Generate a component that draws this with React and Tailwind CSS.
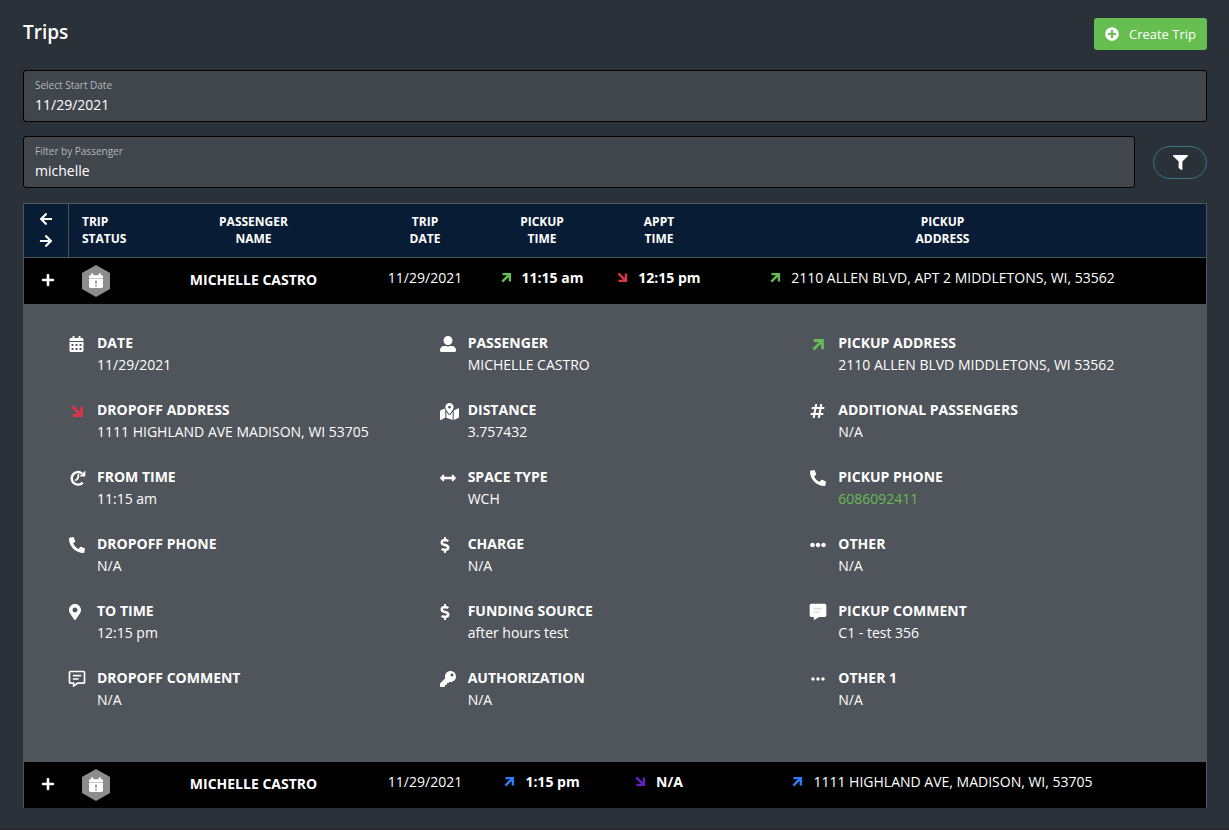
import { useState } from "react";
import {
  FaArrowLeft, FaArrowRight, FaArrowsAltH, FaCalendarAlt, FaDollarSign, FaEllipsisH, FaFilter,
  FaHashtag, FaKey, FaMapMarkedAlt, FaMapMarkerAlt, FaPhoneAlt, FaPlus, FaPlusCircle, FaUserAlt,
} from "react-icons/fa";
import { BiDotsHorizontalRounded, BiMessageDetail } from "react-icons/bi";

const ArrowUp = ({ className }) => (
  <svg viewBox="0 0 12 12" className={className} fill="none" stroke="currentColor" strokeWidth="2.6">
    <path d="M1.6 2.3h8.1V10.4M9.6 2.4L1.4 10.6" />
  </svg>
);

const ArrowDown = ({ className }) => (
  <svg viewBox="0 0 12 12" className={className} fill="none" stroke="currentColor" strokeWidth="2.6">
    <path d="M9.7 1.6v8.1H1.6M9.6 9.6L1.4 1.4" />
  </svg>
);

const ClockRefresh = () => (
  <svg viewBox="0 0 16 16" className="w-[17px] h-4" fill="none" stroke="currentColor" strokeWidth="2.4">
    <path d="M12.4 3.4A6.3 6.3 0 1 0 13.2 12.6" />
    <path d="M15.8 0.4v6.2H9.8z" fill="currentColor" stroke="none" />
    <path d="M9 4.2L8.4 8.4L5.8 10.6" strokeWidth="1.8" />
  </svg>
);

const MessageSolid = () => (
  <svg viewBox="0 0 24 24" className="size-5 -m-0.5" fill="#fff">
    <path d="M20 2H4c-1.103 0-2 .894-2 1.992v12.016C2 17.106 2.897 18 4 18h3v4l6.351-4H20c1.103 0 2-.894 2-1.992V3.992A1.998 1.998 0 0 0 20 2z" />
    <path d="M7 7h10v2H7zM7 11h7v2H7z" fill="#dcdddf" />
  </svg>
);

const StatusBadge = () => (
  <svg viewBox="0 0 28 32" className="w-7 h-8" role="img" aria-label="Scheduled">
    <path d="M14 0L28 8v16L14 32L0 24V8z" fill="#8d8d8d" />
    <path d="M9 8.6h2.4v1.6h5.2V8.6H19v1.6h.6a1.4 1.4 0 0 1 1.4 1.4V13H7v-1.4a1.4 1.4 0 0 1 1.4-1.4H9zM7 13.6h14v8a1.4 1.4 0 0 1-1.4 1.4H8.4a1.4 1.4 0 0 1-1.4-1.4z" fill="#fff" />
    <path d="M13.3 15.4h1.4v3.4h-1.4zM13.3 20h1.4v1.4h-1.4z" fill="#777" />
  </svg>
);

const details = [
  { icon: <FaCalendarAlt className="h-4 w-[15px]" />, title: "DATE", value: "11/29/2021" },
  { icon: <FaUserAlt className="size-4" />, title: "PASSENGER", value: "MICHELLE CASTRO" },
  { icon: <ArrowUp className="size-[13px] m-0.5 text-[#66bb55]" />, title: "PICKUP ADDRESS", value: "2110 ALLEN BLVD MIDDLETONS, WI 53562" },
  { icon: <ArrowDown className="size-[13px] m-0.5 text-[#dc3545]" />, title: "DROPOFF ADDRESS", value: "1111 HIGHLAND AVE MADISON, WI 53705" },
  { icon: <FaMapMarkedAlt className="h-[17px] w-[19px]" />, title: "DISTANCE", value: "3.757432" },
  { icon: <FaHashtag className="h-4 w-[15px]" />, title: "ADDITIONAL PASSENGERS", value: "N/A" },
  { icon: <ClockRefresh />, title: "FROM TIME", value: "11:15 am" },
  { icon: <FaArrowsAltH className="size-4" />, title: "SPACE TYPE", value: "WCH" },
  { icon: <FaPhoneAlt className="size-4" />, title: "PICKUP PHONE", value: "6086092411", href: "tel:6086092411" },
  { icon: <FaPhoneAlt className="size-4" />, title: "DROPOFF PHONE", value: "N/A" },
  { icon: <FaDollarSign className="h-4 w-2.5" />, title: "CHARGE", value: "N/A" },
  { icon: <FaEllipsisH className="size-4" />, title: "OTHER", value: "N/A" },
  { icon: <FaMapMarkerAlt className="h-4 w-3" />, title: "TO TIME", value: "12:15 pm" },
  { icon: <FaDollarSign className="h-4 w-2.5" />, title: "FUNDING SOURCE", value: "after hours test" },
  { icon: <MessageSolid />, title: "PICKUP COMMENT", value: "C1 - test 356" },
  { icon: <BiMessageDetail className="size-5 -m-0.5" />, title: "DROPOFF COMMENT", value: "N/A" },
  { icon: <FaKey className="size-4" />, title: "AUTHORIZATION", value: "N/A" },
  { icon: <BiDotsHorizontalRounded className="size-5 -m-0.5" />, title: "OTHER 1", value: "N/A" },
];

const trips = [
  {
    id: 1, name: "MICHELLE CASTRO", date: "11/29/2021", pickup: "11:15 am", appt: "12:15 pm",
    address: "2110 ALLEN BLVD, APT 2 MIDDLETONS, WI, 53562",
    up: "text-[#66bb55]", down: "text-[#dc3545]",
  },
  {
    id: 2, name: "MICHELLE CASTRO", date: "11/29/2021", pickup: "1:15 pm", appt: "N/A",
    address: "1111 HIGHLAND AVE, MADISON, WI, 53705",
    up: "text-[#2f7cf6]", down: "text-[#6420c8]",
  },
];

const Field = ({ id, label, value, onChange }) => (
  <div className="flex-1 rounded-[3px] border border-black bg-[#41454c] px-[11px] py-[5px]">
    <label htmlFor={id} className="block text-[10px] leading-[18px] text-[#b4b8bd]">{label}</label>
    <input
      id={id}
      type="text"
      value={value}
      onChange={onChange}
      className="block w-full bg-transparent text-sm leading-[22px] text-white outline-none"
    />
  </div>
);

const TripRow = ({ trip, onToggle }) => (
  <tr className="h-[46px] bg-black">
    <td className="pl-1 pb-0.5">
      <button type="button" aria-label="Toggle details" onClick={onToggle} className="block mx-auto">
        <FaPlus className="size-3.5" />
      </button>
    </td>
    <td className="pl-[13px]"><StatusBadge /></td>
    <td className="pb-0.5 text-center font-bold">{trip.name}</td>
    <td className="pb-1.5 text-center">{trip.date}</td>
    <td className="pb-1.5 font-bold">
      <div className="flex items-center justify-center gap-2.5">
        <ArrowUp className={`size-[11px] ${trip.up}`} />{trip.pickup}
      </div>
    </td>
    <td className="pb-1.5 font-bold">
      <div className="flex items-center justify-center gap-2.5">
        <ArrowDown className={`size-[11px] ${trip.down}`} />{trip.appt}
      </div>
    </td>
    <td className="pb-1.5">
      <div className="flex items-center justify-center gap-2.5">
        <ArrowUp className={`size-[11px] ${trip.up}`} />{trip.address}
      </div>
    </td>
    <td></td>
  </tr>
);

const TripDetails = () => (
  <tr className="bg-[#50545b]">
    <td colSpan={8} className="pt-7 pb-[51px] pl-[45px] pr-[25px]">
      <dl className="grid grid-cols-3 gap-y-[23px]">
        {details.map(({ icon, title, value, href }) => (
          <div key={title} className="flex">
            <span className="w-7 shrink-0 pt-1">{icon}</span>
            <div className="leading-[22px]">
              <dt className="font-bold">{title}</dt>
              <dd>{href ? <a href={href} className="text-[#66bb55]">{value}</a> : value}</dd>
            </div>
          </div>
        ))}
      </dl>
    </td>
  </tr>
);

export default function App() {
  const [date, setDate] = useState("11/29/2021");
  const [passenger, setPassenger] = useState("michelle");
  const [open, setOpen] = useState(1);

  return (
    <main className="min-h-screen border-b-2 border-[#2e2832] bg-[#2b3138] pl-[23px] pr-[22px] pt-[18px] font-['Open_Sans','Noto_Sans',sans-serif] text-sm text-white">
      <header className="flex items-start justify-between">
        <h1 className="text-[19px] leading-7 font-semibold">Trips</h1>
        <button type="button" className="flex h-8 items-center gap-2.5 rounded-[3px] bg-[#66bd50] px-[11px] text-[13px]">
          <FaPlusCircle className="size-3.5" />Create Trip
        </button>
      </header>

      <div className="mt-5 flex">
        <Field id="start-date" label="Select Start Date" value={date} onChange={(e) => setDate(e.target.value)} />
      </div>
      <div className="mt-[14px] flex items-center gap-[18px]">
        <Field id="passenger" label="Filter by Passenger" value={passenger} onChange={(e) => setPassenger(e.target.value)} />
        <button type="button" aria-label="Filter" className="flex h-[33px] w-[54px] items-center justify-center rounded-full border border-[#347785]">
          <FaFilter className="size-[15px]" />
        </button>
      </div>

      <table className="mt-[15px] w-full table-fixed border-x border-t border-[#50545b]">
        <colgroup>
          <col className="w-[45px]" />
          <col className="w-[72px]" />
          <col className="w-[226px]" />
          <col className="w-[117px]" />
          <col className="w-[117px]" />
          <col className="w-[117px]" />
          <col />
          <col className="w-[39px]" />
        </colgroup>
        <thead className="border-b border-[#50545b] bg-[#091c36] text-xs leading-[17px]">
          <tr className="h-[54px]">
            <th className="border-r border-[#50545b] pb-0.5">
              <div className="flex flex-col items-center gap-2 text-sm">
                <button type="button" aria-label="Previous columns"><FaArrowLeft /></button>
                <button type="button" aria-label="Next columns"><FaArrowRight /></button>
              </div>
            </th>
            <th className="pb-0.5 pl-[13px] text-left font-bold">TRIP<br />STATUS</th>
            <th className="pb-0.5">PASSENGER<br />NAME</th>
            <th className="pb-0.5">TRIP<br />DATE</th>
            <th className="pb-0.5">PICKUP<br />TIME</th>
            <th className="pb-0.5">APPT<br />TIME</th>
            <th className="pb-0.5">PICKUP<br />ADDRESS</th>
            <th></th>
          </tr>
        </thead>
        <tbody>
          <TripRow trip={trips[0]} onToggle={() => setOpen(open === 1 ? null : 1)} />
          {open === 1 && <TripDetails />}
          <TripRow trip={trips[1]} onToggle={() => setOpen(open === 2 ? null : 2)} />
          {open === 2 && <TripDetails />}
        </tbody>
      </table>
    </main>
  );
}
